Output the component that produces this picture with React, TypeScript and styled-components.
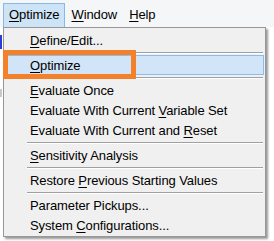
import React from "react";
import styled, { createGlobalStyle } from "styled-components";

const GlobalStyle = createGlobalStyle`
  html, body {
    margin: 0;
    padding: 0;
    background: #ffffff;
  }
  body {
    font-family: "Liberation Sans", Arial, sans-serif;
    font-size: 13px;
    color: #000000;
  }
`;

const Screen = styled.div`
  position: relative;
  width: 274px;
  height: 241px;
  overflow: hidden;
  background: #ffffff;
`;

const MenuBar = styled.div`
  display: flex;
  align-items: stretch;
  height: 27px;
  padding: 3px 0 0 3px;
  box-sizing: border-box;
  background: #f5f6f7;
`;

const BarItem = styled.div<{ $open?: boolean }>`
  display: flex;
  align-items: center;
  padding: 0 4px 1px 5px;
  margin-right: 1px;
  border: 1px solid ${(p) => (p.$open ? "#86b8e8" : "transparent")};
  border-bottom: none;
  background: ${(p) => (p.$open ? "#cde3f6" : "transparent")};
  line-height: 20px;
`;

const Text = styled.span`
  white-space: pre;
  letter-spacing: -0.1px;
`;

const Accel = styled.span`
  text-decoration: underline;
  text-underline-offset: 2px;
  text-decoration-thickness: 1px;
`;

const Dropdown = styled.div`
  position: relative;
  z-index: 1;
  width: 263px;
  margin-left: 3px;
  padding: 2px 0 1px;
  box-sizing: border-box;
  background: #f0f0f0;
  border: 1px solid #979797;
  box-shadow: 2px 2px 2px rgba(0, 0, 0, 0.4);
`;

const Item = styled.div<{ $active?: boolean }>`
  display: flex;
  align-items: center;
  height: 20px;
  margin: 0 1px;
  padding-left: 24px;
  box-sizing: border-box;
  border: 1px solid ${(p) => (p.$active ? "#8cbcec" : "transparent")};
  background: ${(p) => (p.$active ? "#d2e4f7" : "transparent")};
`;

const Separator = styled.div`
  height: 5px;
  display: flex;
  flex-direction: column;
  justify-content: center;
  padding: 0 2px 0 23px;

  &::before {
    content: "";
    height: 1px;
    background: #a0a0a0;
  }
  &::after {
    content: "";
    height: 1px;
    background: #ffffff;
  }
`;

const EdgeMark = styled.div<{ $top: number; $height: number; $color: string }>`
  position: absolute;
  left: 0;
  width: 2px;
  top: ${(p) => p.$top}px;
  height: ${(p) => p.$height}px;
  background: ${(p) => p.$color};
`;

const Callout = styled.div`
  position: absolute;
  z-index: 2;
  left: 3px;
  top: 50px;
  width: 133px;
  height: 29px;
  box-sizing: border-box;
  border: 5px solid #f5802a;
  pointer-events: none;
`;

type Entry = string | null;

const entries: Entry[] = [
  "&Define/Edit...",
  null,
  "&Optimize",
  null,
  "&Evaluate Once",
  "Evaluate With Current &Variable Set",
  "Evaluate With Current and &Reset",
  null,
  "&Sensitivity Analysis",
  null,
  "Restore &Previous Starting Values",
  null,
  "Parameter Pickups...",
  "System &Configurations...",
];

// "&X" marks the keyboard accelerator letter
const Label = ({ text }: { text: string }) => {
  const i = text.indexOf("&");
  if (i < 0) return <Text>{text}</Text>;
  return (
    <Text>
      {text.slice(0, i)}
      <Accel>{text[i + 1]}</Accel>
      {text.slice(i + 2)}
    </Text>
  );
};

export default function App() {
  return (
    <>
      <GlobalStyle />
      <Screen>
        <MenuBar>
          <BarItem $open>
            <Label text="&Optimize" />
          </BarItem>
          <BarItem>
            <Label text="&Window" />
          </BarItem>
          <BarItem>
            <Label text="&Help" />
          </BarItem>
        </MenuBar>
        <EdgeMark $top={35} $height={14} $color="#2b3bd8" />
        <EdgeMark $top={89} $height={8} $color="#c8c8c8" />
        <Dropdown>
          {entries.map((e, i) =>
            e === null ? (
              <Separator key={i} />
            ) : (
              <Item key={i} $active={e === "&Optimize"}>
                <Label text={e} />
              </Item>
            )
          )}
        </Dropdown>
        <Callout />
      </Screen>
    </>
  );
}
